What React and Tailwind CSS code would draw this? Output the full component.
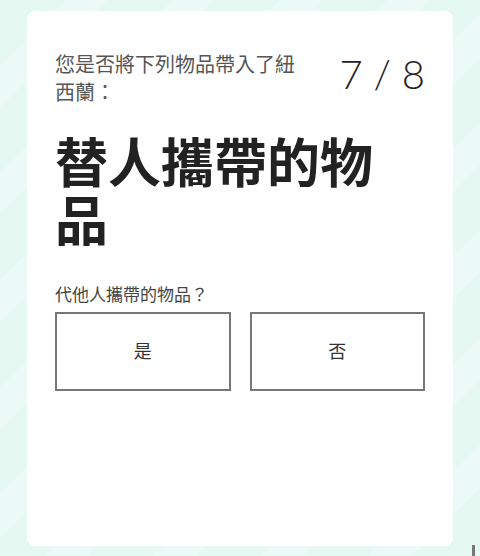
export default function App() {
  const options = ["是", "否"];

  return (
    <div className="relative min-h-[556px] bg-[#e6f9f2] bg-[repeating-linear-gradient(135deg,#e5f8f2_0px,#e5f8f2_46px,#ebfaf6_46px,#ebfaf6_76px)] px-[27px] pt-[11px] pb-[10px] font-['Noto_Sans','Noto_Sans_CJK_TC',sans-serif]">
      <div className="flex h-[535px] flex-col rounded-lg bg-white px-[28px] pt-[40px]">
        <div className="flex items-start justify-between">
          <p className="w-[250px] text-[20px] leading-[28px] text-[#555]">
            您是否將下列物品帶入了紐西蘭：
          </p>
          <div className="mt-[3px] font-['Lato',sans-serif] text-[40px] font-light leading-none text-[#222]">
            7 / 8
          </div>
        </div>

        <h1 className="mt-[27px] w-[345px] text-[53px] font-bold leading-[58px] text-[#222]">
          替人攜帶的物品
        </h1>

        <p className="mt-[33px] text-[17px] leading-[24px] text-[#444]">
          代他人攜帶的物品？
        </p>

        <div className="mt-[5px] grid grid-cols-2 gap-[19px]">
          {options.map((opt) => (
            <button
              key={opt}
              type="button"
              className="flex h-[79px] items-center justify-center border-2 border-[#777] bg-white text-[18px] text-[#333]"
            >
              {opt}
            </button>
          ))}
        </div>
      </div>

      <div className="absolute bottom-0 right-[5px] h-[11px] w-[3px] bg-[#777]" />
    </div>
  );
}
